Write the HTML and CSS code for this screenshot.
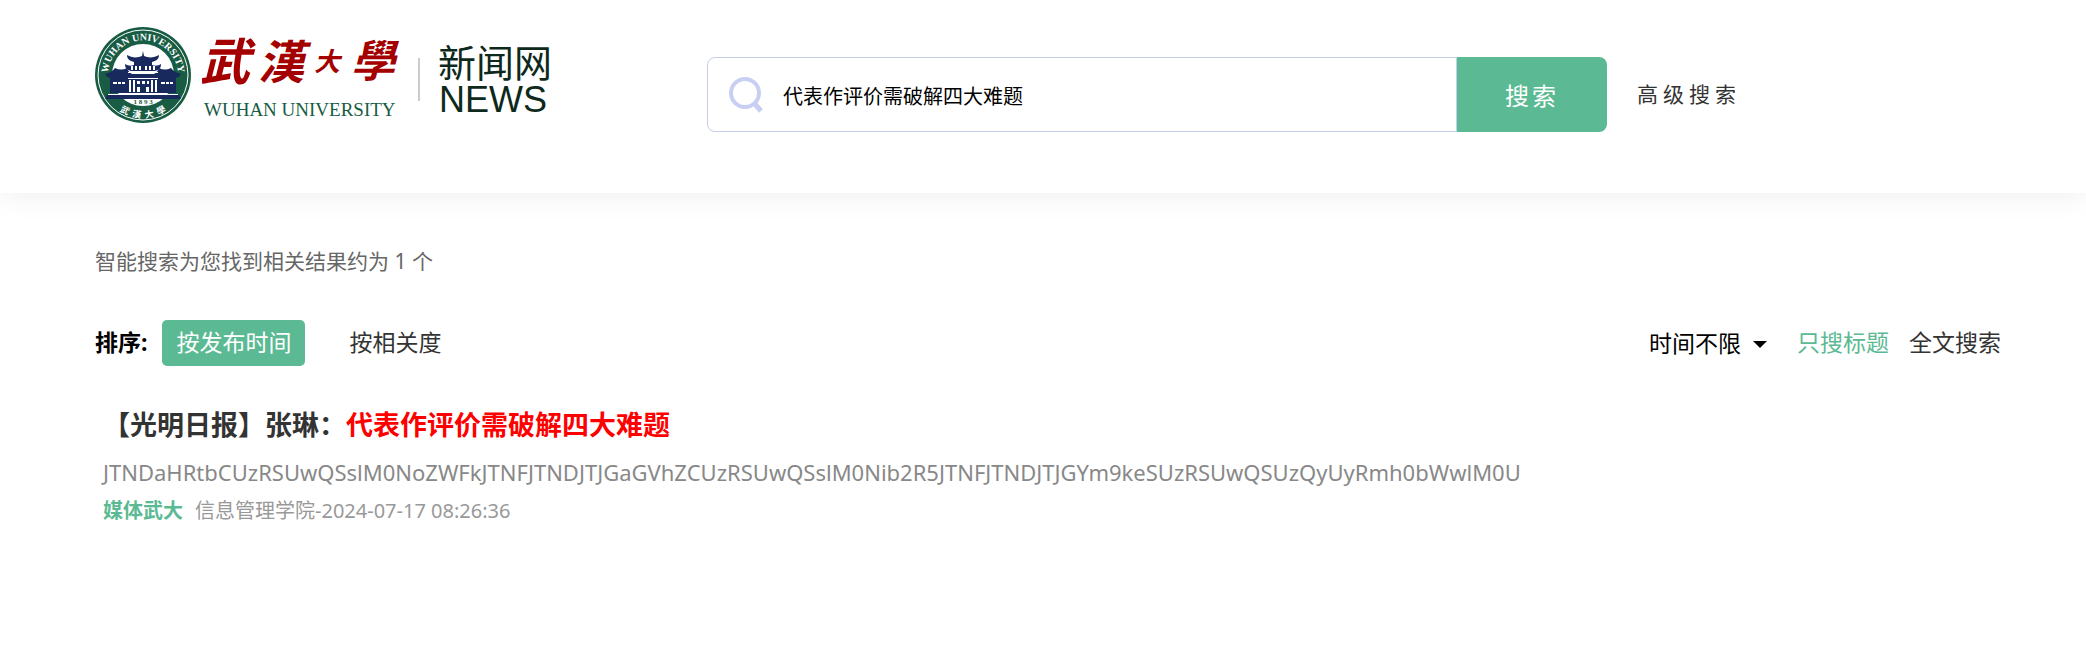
FILE: index.html
```html
<!DOCTYPE html>
<html lang="zh-CN">
<head>
  <meta charset="UTF-8">
  <title>武汉大学新闻网 - 搜索</title>
  <link rel="stylesheet" href="styles.css">
</head>
<body>
  <header class="header">
    <a class="logo" href="#" aria-label="武汉大学新闻网">
      <svg width="462" height="100" viewBox="94 25 462 100">
        <defs>
          <path id="seal-top" d="M110 87a35 35 0 1 1 66 0"/>
          <path id="seal-bottom" d="M100 75a43 43 0 0 0 86 0"/>
        </defs>
        <!-- 校徽 -->
        <circle cx="143" cy="75" r="48" fill="#175c43"/>
        <circle cx="143" cy="75" r="45" fill="none" stroke="#fff" stroke-width="1"/>
        <circle cx="143" cy="75" r="31" fill="#fff"/>
        <text class="seal-en"><textPath href="#seal-top" startOffset="50%" text-anchor="middle">WUHAN UNIVERSITY</textPath></text>
        <text class="seal-cn"><textPath href="#seal-bottom" startOffset="50%" text-anchor="middle">武&ensp;漢&ensp;大&ensp;學</textPath></text>
        <g fill="#17295d">
          <path d="M142 56l1-5 1 5 3 1c5 1 8 0 12-2 0 4-3 6-7 7v3h-18v-3c-4-1-7-3-7-7 4 2 7 3 12 2z"/>
          <path d="M125 64c3 2 6 2 9 1h18c3 1 6 1 9-1 0 4-2 6-6 7h-24c-4-1-6-3-6-7z"/>
          <path d="M105 74c5-1 8-3 10-6 4 2 8 2 12 0 1 3 3 5 5 6h22c2-1 4-3 5-6 4 2 8 2 12 0 2 3 5 5 10 6-2 3-4 4-7 4h-62c-3 0-5-1-7-4z"/>
          <path d="M110 77h66v16h-66z"/>
          <path d="M108 94h70l3 5h-76z"/>
        </g>
        <g fill="#fff">
          <path d="M128 72h30v1h-30zM128 78h30v1h-30zM113 82h4v2h-4zM118 82h3v2h-3zM122 82h3v2h-3zM161 82h4v2h-4zM166 82h3v2h-3zM170 82h3v2h-3z"/>
          <path d="M129 80h2v12h-2zM133 80h2v12h-2zM151 80h2v12h-2zM155 80h2v12h-2zM137 81h3v3h-3zM142 81h3v3h-3zM147 81h2v3h-2zM137 87h3v5h-3zM146 87h3v5h-3zM108 94h70v1h-70z"/>
          <path d="M131 66h2v4h-2zM135 66h2v4h-2zM139 66h2v4h-2zM145 66h2v4h-2zM149 66h2v4h-2zM153 66h2v4h-2z"/>
        </g>
        <text class="seal-year" x="143" y="104" text-anchor="middle">1 8 9 3</text>
        <!-- 校名 -->
        <g class="name-cn">
          <text x="200" y="80" font-size="50">武</text>
          <text x="258" y="79" font-size="46">漢</text>
          <text x="314" y="71" font-size="26">大</text>
          <text x="351" y="77" font-size="44">學</text>
        </g>
        <text class="name-en" x="204" y="116">WUHAN UNIVERSITY</text>
        <path d="M418 58h2v43h-2z" fill="#ccc"/>
        <text class="site-cn" x="438" y="77">新闻网</text>
        <text class="site-en" x="439" y="112">NEWS</text>
      </svg>
    </a>
    <form class="search" action="#">
      <div class="search-box">
        <svg class="search-icon" width="34" height="36" viewBox="0 0 34 36">
          <circle cx="16" cy="16" r="14" fill="none" stroke="#c8cff2" stroke-width="4"/>
          <path d="M25 26l7 8" stroke="#c8cff2" stroke-width="5"/>
        </svg>
        <input class="search-input" type="text" aria-label="搜索关键词" value="代表作评价需破解四大难题">
      </div>
      <button class="search-btn" type="submit">搜索</button>
    </form>
    <a class="advanced" href="#">高级搜索</a>
  </header>

  <main class="main">
    <p class="count">智能搜索为您找到相关结果约为 1 个</p>
    <div class="filter">
      <div class="sort">
        <strong class="sort-label">排序:</strong>
        <a class="sort-item active" href="#">按发布时间</a>
        <a class="sort-item" href="#">按相关度</a>
      </div>
      <div class="scope">
        <div class="time">
          <select class="time-select" aria-label="时间范围">
            <option>时间不限</option>
          </select>
        </div>
        <a class="scope-item active" href="#">只搜标题</a>
        <a class="scope-item" href="#">全文搜索</a>
      </div>
    </div>
    <article class="result">
      <h3 class="result-title"><a href="#">【光明日报】张琳：<em>代表作评价需破解四大难题</em></a></h3>
      <p class="result-text">JTNDaHRtbCUzRSUwQSslM0NoZWFkJTNFJTNDJTJGaGVhZCUzRSUwQSslM0Nib2R5JTNFJTNDJTJGYm9keSUzRSUwQSUzQyUyRmh0bWwlM0U</p>
      <p class="result-meta"><a href="#">媒体武大</a><span>信息管理学院-2024-07-17 08:26:36</span></p>
    </article>
  </main>
</body>
</html>
```

FILE: styles.css
```css
* {
  box-sizing: border-box;
}

body {
  margin: 0;
  background: #fff;
  color: #000;
  font-family: "Noto Sans", "Noto Sans CJK SC", sans-serif;
}

a {
  color: #333;
  text-decoration: none;
}

p,
h3 {
  margin: 0;
}

/* 头部 */
.header {
  display: flex;
  align-items: flex-start;
  padding: 25px 85px 61px 94px;
  box-shadow: 0 0 30px rgba(0, 0, 0, 0.08);
}

.logo {
  flex: none;
  height: 100px;
  margin-right: 151px;
}

.logo svg {
  display: block;
  overflow: visible;
}

.seal-en {
  fill: #fff;
  font: bold 10px "Liberation Serif", serif;
}

.seal-cn {
  fill: #fff;
  font: bold 9px "Noto Sans CJK TC", sans-serif;
}

.seal-year {
  fill: #175c43;
  font: bold 7px "Liberation Serif", serif;
}

.name-cn {
  fill: #a40000;
  font-family: "Noto Sans CJK TC", sans-serif;
  font-style: italic;
  font-weight: bold;
}

.name-en {
  fill: #175c43;
  font: 19px "Liberation Serif", serif;
}

.site-cn {
  fill: #0d291b;
  font: 38px "Noto Sans CJK SC", sans-serif;
}

.site-en {
  fill: #0d291b;
  font: 36px "Liberation Sans", sans-serif;
}

.search {
  display: flex;
  flex: 0 1 900px;
  height: 75px;
  margin-top: 32px;
}

.search-box {
  display: flex;
  flex: 1;
  align-items: center;
  padding-left: 21px;
  border: 1px solid #c5cdec;
  border-radius: 8px 0 0 8px;
}

.search-icon {
  flex: none;
}

.search-input {
  flex: 1;
  min-width: 0;
  height: 100%;
  padding: 2px 20px 0;
  border: none;
  outline: none;
  background: none;
  font-family: inherit;
  font-size: 20px;
}

.search-btn {
  width: 150px;
  border: none;
  border-radius: 0 8px 8px 0;
  background: #5bba93;
  color: #fff;
  font-family: inherit;
  font-size: 24px;
  letter-spacing: 3px;
  cursor: pointer;
}

.advanced {
  margin: 32px 0 0 30px;
  font-size: 21px;
  line-height: 75px;
  letter-spacing: 5px;
  white-space: nowrap;
}

/* 搜索结果 */
.main {
  padding: 52px 85px 0 95px;
}

.count {
  color: #666;
  font-size: 21px;
  line-height: 32px;
}

.filter {
  display: flex;
  justify-content: space-between;
  margin-top: 43px;
  font-size: 23px;
  line-height: 45px;
}

.sort,
.scope {
  display: flex;
}

.sort-label {
  margin-right: 15px;
}

.sort-item {
  margin-right: 30px;
  padding: 0 14px;
  border-radius: 5px;
}

.sort-item.active {
  background: #5bba93;
  color: #fff;
}

.scope {
  gap: 20px;
}

.time {
  position: relative;
  margin-right: 10px;
}

.time-select {
  height: 45px;
  padding: 0 26px 0 0;
  border: none;
  background: none;
  color: #000;
  font-family: inherit;
  font-size: 23px;
  appearance: none;
}

.time::after {
  content: "";
  position: absolute;
  top: 21px;
  right: 0;
  border: 7px solid transparent;
  border-top-color: #000;
  border-bottom: none;
  pointer-events: none;
}

.scope-item.active {
  color: #5bba93;
}

.result {
  padding: 38px 8px;
}

.result-title {
  font-size: 27px;
  line-height: 42px;
}

.result-title em {
  color: #f00;
  font-style: normal;
}

.result-text {
  margin-top: 7px;
  color: #888;
  font-size: 22px;
  line-height: 38px;
  overflow-wrap: anywhere;
}

.result-meta {
  display: flex;
  gap: 12px;
  color: #999;
  font-size: 20px;
  line-height: 40px;
}

.result-meta a {
  color: #5bba93;
  font-weight: bold;
}
```
